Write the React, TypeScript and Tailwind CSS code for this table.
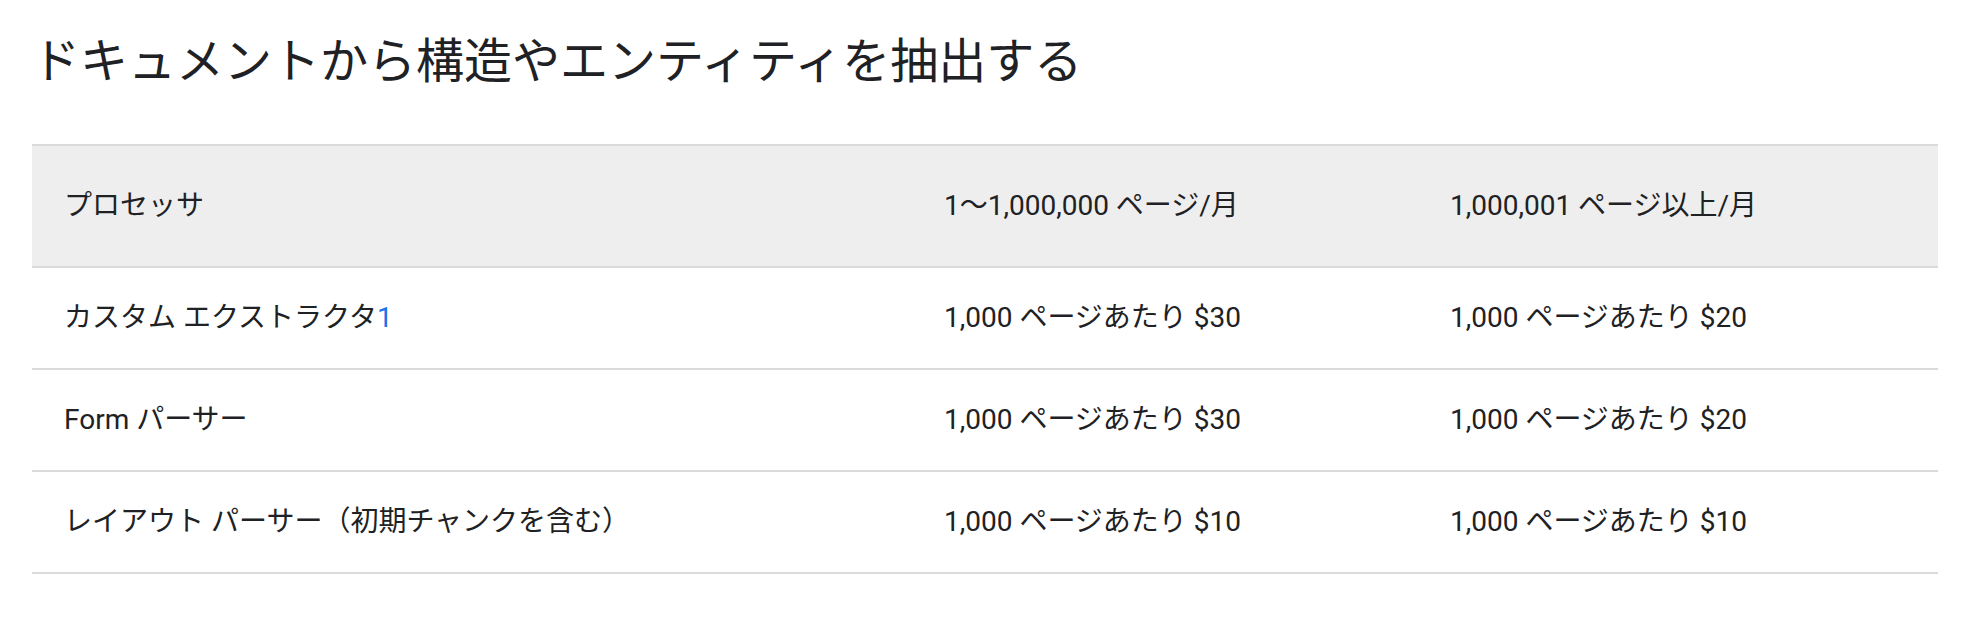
import React from "react";

const rows = [
  { name: "カスタム エクストラクタ", sup: "1", a: "1,000 ページあたり $30", b: "1,000 ページあたり $20" },
  { name: "Form パーサー", a: "1,000 ページあたり $30", b: "1,000 ページあたり $20" },
  { name: "レイアウト パーサー（初期チャンクを含む）", a: "1,000 ページあたり $10", b: "1,000 ページあたり $10" },
];

export default function App() {
  return (
    <div
      className="w-[1976px] h-[618px] bg-white pl-8 pr-[38px] pt-[34px] text-[#202124]"
      style={{ fontFamily: 'Roboto, "Noto Sans CJK JP", sans-serif' }}
    >
      <h3 className="text-[48px] leading-[56px] font-normal mb-[54px] whitespace-nowrap">
        ドキュメントから構造やエンティティを抽出する
      </h3>
      <table className="w-full table-fixed border-collapse text-[28px] leading-[40px]">
        <colgroup>
          <col className="w-[880px]" />
          <col className="w-[506px]" />
          <col />
        </colgroup>
        <thead>
          <tr className="bg-[#eeeeee] border-t-2 border-b-2 border-[#dadada]">
            <th className="h-[122px] px-8 text-left font-normal">プロセッサ</th>
            <th className="h-[122px] px-8 text-left font-normal">1〜1,000,000 ページ/月</th>
            <th className="h-[122px] px-8 text-left font-normal">1,000,001 ページ以上/月</th>
          </tr>
        </thead>
        <tbody>
          {rows.map((r, i) => (
            <tr key={i} className="border-b-2 border-[#dadada]">
              <td className="h-[102px] px-8">
                {r.name}
                {r.sup && <span className="text-[#1a73e8]">{r.sup}</span>}
              </td>
              <td className="h-[102px] px-8">{r.a}</td>
              <td className="h-[102px] px-8">{r.b}</td>
            </tr>
          ))}
        </tbody>
      </table>
    </div>
  );
}
